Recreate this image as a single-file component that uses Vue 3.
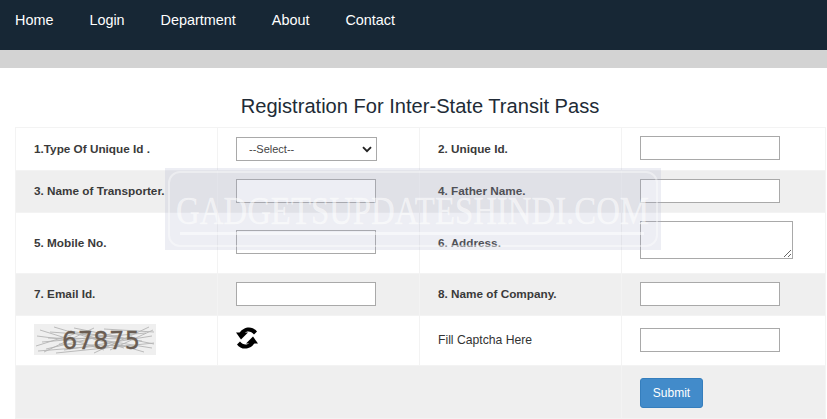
<script setup>
const links = ['Home', 'Login', 'Department', 'About', 'Contact']
const scratches = [
  [2, 22, 40, 10], [6, 6, 70, 26], [10, 28, 60, 4], [20, 3, 90, 24], [30, 26, 118, 12],
  [40, 4, 120, 20], [48, 10, 110, 28], [14, 14, 100, 15], [60, 29, 115, 3], [3, 12, 50, 18],
  [70, 5, 120, 8], [25, 20, 95, 22], [12, 25, 85, 8], [55, 14, 118, 24], [8, 18, 112, 9],
  [16, 8, 84, 13], [4, 27, 66, 22], [34, 7, 108, 17], [22, 29, 120, 19], [76, 26, 119, 6]
]
</script>

<template>
  <div class="page">
    <nav class="nav">
      <a v-for="l in links" :key="l" class="nav-link">{{ l }}</a>
    </nav>
    <div class="band"></div>
    <h1 class="title">Registration For Inter-State Transit Pass</h1>
    <table class="form">
      <colgroup>
        <col class="c1" /><col class="c2" /><col class="c3" /><col class="c4" />
      </colgroup>
      <tbody>
        <tr class="r43">
          <td class="label">1.Type Of Unique Id .</td>
          <td class="select-cell">
            <div class="select-wrap">
              <select class="select"><option>--Select--</option></select>
              <svg class="chev" viewBox="0 0 10 7" width="10" height="7"><path d="M1 1.2 5 5.2 9 1.2" fill="none" stroke="#222" stroke-width="1.9" /></svg>
            </div>
          </td>
          <td class="label">2. Unique Id.</td>
          <td><input class="field" /></td>
        </tr>
        <tr class="r42 alt">
          <td class="label">3. Name of Transporter.</td>
          <td><input class="field" /></td>
          <td class="label">4. Father Name.</td>
          <td><input class="field" /></td>
        </tr>
        <tr class="r61">
          <td class="label">5. Mobile No.</td>
          <td><input class="field" /></td>
          <td class="label">6. Address.</td>
          <td class="area-cell"><textarea class="area"></textarea></td>
        </tr>
        <tr class="r42 alt">
          <td class="label">7. Email Id.</td>
          <td><input class="field" /></td>
          <td class="label">8. Name of Company.</td>
          <td><input class="field" /></td>
        </tr>
        <tr class="r50">
          <td>
            <svg class="captcha" viewBox="0 0 122 31" width="122" height="31">
              <rect width="122" height="31" fill="#efefef" />
              <line v-for="(s, i) in scratches" :key="i" :x1="s[0]" :y1="s[1]" :x2="s[2]" :y2="s[3]" stroke="#b4b4b4" stroke-width="0.9" />
              <text x="28" y="25" class="captcha-text">67875</text>
            </svg>
          </td>
          <td>
            <svg class="refresh" viewBox="0 0 22 22" width="22" height="22">
              <g>
                <path d="M0 5.5H12L5 12.5Z" fill="#000" />
                <path d="M3.5 6C5.5 2.2 9.5 0.4 13 0.4C16.2 0.4 19.2 2 21 4.6L18 7.4C16.5 5.4 14.4 4.4 12.4 4.4C10.8 4.4 9.4 5 8.4 6.4Z" fill="#000" />
              </g>
              <g transform="rotate(180 11 11)">
                <path d="M0 5.5H12L5 12.5Z" fill="#000" />
                <path d="M3.5 6C5.5 2.2 9.5 0.4 13 0.4C16.2 0.4 19.2 2 21 4.6L18 7.4C16.5 5.4 14.4 4.4 12.4 4.4C10.8 4.4 9.4 5 8.4 6.4Z" fill="#000" />
              </g>
            </svg>
          </td>
          <td class="label plain">Fill Captcha Here</td>
          <td><input class="field" /></td>
        </tr>
        <tr class="r53 alt">
          <td colspan="3"></td>
          <td class="submit-cell"><button class="submit" type="button">Submit</button></td>
        </tr>
      </tbody>
    </table>
    <div class="mark">
      <div class="mark-frame">
        <span class="mark-text">GADGETSUPDATESHINDI.COM</span>
        <div class="mark-line"></div>
      </div>
    </div>
  </div>
</template>

<style>
html, body { margin: 0; background: #fff; }
</style>

<style scoped>
.page {
  position: relative;
  width: 827px;
  height: 419px;
  overflow: hidden;
  background: #fff;
  font-family: "Liberation Sans", Arial, sans-serif;
  color: #333;
}
.nav {
  display: flex;
  height: 50px;
  box-sizing: border-box;
  padding: 12px 0 0 15px;
  gap: 36px;
  background: #172735;
}
.nav-link {
  color: #fff;
  font-size: 14.4px;
  line-height: 16px;
}
.band { height: 18px; background: #d3d3d3; }
.title {
  margin: 0 0 0 15px;
  width: 810px;
  height: 59px;
  box-sizing: border-box;
  padding-top: 27px;
  text-align: center;
  font-weight: 400;
  font-size: 20.1px;
  line-height: 23px;
  color: #212b36;
}
.form {
  margin-left: 15px;
  width: 810px;
  table-layout: fixed;
  border-collapse: collapse;
}
.c1 { width: 202px; }
.c2 { width: 202px; }
.c3 { width: 202px; }
.c4 { width: 204px; }
.form td {
  box-sizing: border-box;
  padding: 0 0 2px 18px;
  border: 1px solid #f3f3f3;
  vertical-align: middle;
}
.r43 { height: 43px; }
.r42 { height: 42px; }
.r61 { height: 61px; }
.r50 { height: 50px; }
.r53 { height: 53px; }
.alt { background: #efefef; }
.form td.label {
  font-size: 11.75px;
  font-weight: 700;
  color: #3a3a3a;
}
.form td.plain { font-size: 12.2px; font-weight: 400; color: #333; }
.form td.submit-cell { padding: 1px 0 0 18px; }
.form td.select-cell { padding-bottom: 0; }
.form td.area-cell { padding-bottom: 6px; }
.field {
  display: block;
  box-sizing: border-box;
  width: 140px;
  height: 24px;
  margin: 0;
  padding: 1px 2px;
  border: 1px solid #a9a9a9;
  background: #fff;
  border-radius: 0;
}
.select-wrap { position: relative; width: 141px; height: 24px; }
.select {
  display: block;
  appearance: none;
  box-sizing: border-box;
  width: 141px;
  height: 24px;
  margin: 0;
  padding: 0 0 0 12px;
  border: 1px solid #a9a9a9;
  border-radius: 0;
  background: #fff;
  font-family: "Liberation Sans", Arial, sans-serif;
  font-size: 11px;
  color: #444;
}
.chev { position: absolute; right: 5px; top: 9px; }
.area {
  display: block;
  box-sizing: border-box;
  width: 153px;
  height: 38px;
  margin: 0;
  padding: 2px;
  border: 1px solid #a9a9a9;
  border-radius: 0;
  background: #fff;
}
.captcha { display: block; }
.captcha-text {
  font-family: "DejaVu Sans", sans-serif;
  font-size: 24px;
  letter-spacing: 0.4px;
  fill: #6a5d52;
  stroke: #6a5d52;
  stroke-width: 0.3px;
}
.refresh { display: block; margin-bottom: 3px; }
.submit {
  display: block;
  box-sizing: border-box;
  width: 63px;
  height: 30px;
  padding: 0;
  border: 1px solid #357ebd;
  border-radius: 3px;
  background: #428bca;
  color: #fff;
  font-family: "Liberation Sans", Arial, sans-serif;
  font-size: 12px;
}
.mark {
  position: absolute;
  left: 165px;
  top: 168px;
  width: 496px;
  height: 82px;
  box-sizing: border-box;
  padding: 3px;
  background: rgba(165, 170, 200, 0.2);
  pointer-events: none;
}
.mark-frame {
  position: relative;
  height: 100%;
  box-sizing: border-box;
  border: 2px solid rgba(255, 255, 255, 0.4);
  border-radius: 12px;
  display: flex;
  justify-content: center;
}
.mark-text {
  display: block;
  margin-top: 15px;
  font-family: "Liberation Serif", "Times New Roman", serif;
  font-size: 41px;
  line-height: 44px;
  white-space: nowrap;
  color: rgba(255, 255, 255, 0.55);
  -webkit-text-stroke: 0.5px rgba(255, 255, 255, 0.4);
  transform: scaleX(0.8);
  transform-origin: center top;
}
.mark-line {
  position: absolute;
  left: 10px;
  right: 12px;
  top: 59px;
  height: 3px;
  background: rgba(255, 255, 255, 0.5);
}
</style>
